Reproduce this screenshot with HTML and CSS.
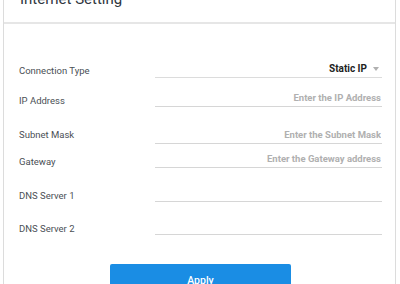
FILE: index.html
```html
<!DOCTYPE html>
<html lang="en">
<head>
    <meta charset="UTF-8">
    <meta name="viewport" content="width=device-width, initial-scale=1.0">
    <title>Internet Setting</title>
    <link rel="stylesheet" href="styles.css">
</head>
<body>
    <div class="card">
        <div class="card-header">
            <h1>Internet Setting</h1>
        </div>

        <form class="setting-form" onsubmit="return false">
            <div class="form-row">
                <label>Connection Type</label>
                <div class="field select-field">
                    <span class="select-value">Static IP</span>
                    <span class="select-arrow"></span>
                </div>
            </div>
            <div class="form-row">
                <label>IP Address</label>
                <input class="field" type="text" placeholder="Enter the IP Address">
            </div>
            <div class="form-row">
                <label>Subnet Mask</label>
                <input class="field" type="text" placeholder="Enter the Subnet Mask">
            </div>
            <div class="form-row">
                <label>Gateway</label>
                <input class="field" type="text" placeholder="Enter the Gateway address">
            </div>
            <div class="form-row">
                <label>DNS Server 1</label>
                <input class="field" type="text">
            </div>
            <div class="form-row">
                <label>DNS Server 2</label>
                <input class="field" type="text">
            </div>

            <!-- Save -->
            <div class="form-actions">
                <button class="apply-btn" type="submit">Apply</button>
            </div>
        </form>
    </div>
</body>
</html>
```

FILE: styles.css
```css
* {
    margin: 0;
    padding: 0;
    box-sizing: border-box;
    font-family: Roboto, 'Liberation Sans', Arial, sans-serif;
}

body {
    background: #fff;
    overflow: hidden;
}

.card {
    width: 393px;
    margin: -20px 0 0 3px;
    background: #fff;
    border-left: 1px solid #dcdcdc;
    border-right: 1px solid #dcdcdc;
}

.card-header {
    padding: 9px 16px 13px;
    border-bottom: 2px solid #e6e6e6;
}

.card-header h1 {
    font-size: 15px;
    line-height: 20px;
    font-weight: 400;
    color: #2f3640;
}

.setting-form {
    padding: 36px 13px 0 15px;
}

.form-row {
    display: flex;
    align-items: flex-end;
    height: 18px;
}

.form-row:nth-child(2) { margin-top: 11px; }
.form-row:nth-child(3) { margin-top: 19px; }
.form-row:nth-child(4) { margin-top: 6px; }
.form-row:nth-child(5) { margin-top: 16px; }
.form-row:nth-child(6) { margin-top: 15px; }

.form-row label {
    width: 136px;
    flex-shrink: 0;
    font-size: 9.5px;
    line-height: 12px;
    color: #4a4f55;
}

.form-row:first-child label {
    margin-bottom: 1px;
}

.form-row:nth-child(3) label {
    margin-bottom: 3px;
}

.field {
    flex: 1;
    height: 18px;
    border: none;
    border-bottom: 1px solid #d6d6d6;
    background: transparent;
    outline: none;
    text-align: right;
    font-size: 9.5px;
    font-weight: 700;
    color: #333;
    padding: 0 1px 0 0;
}

.field::placeholder {
    color: #b0b0b0;
}

.select-field {
    display: flex;
    align-items: center;
    justify-content: flex-end;
    border-bottom-color: #dcdcdc;
    padding-right: 3px;
}

.select-value {
    font-size: 10px;
    font-weight: 700;
    color: #222;
}

.select-arrow {
    width: 0;
    height: 0;
    margin-left: 6px;
    border-left: 3.5px solid transparent;
    border-right: 3.5px solid transparent;
    border-top: 4px solid #b0b0b0;
}

.form-actions {
    display: flex;
    justify-content: center;
    margin-top: 29px;
}

.apply-btn {
    width: 181px;
    height: 32px;
    border: none;
    border-radius: 2px;
    background: #1a8de4;
    color: #fff;
    font-size: 10.5px;
    font-weight: 500;
    padding-top: 1px;
    cursor: pointer;
}
```
